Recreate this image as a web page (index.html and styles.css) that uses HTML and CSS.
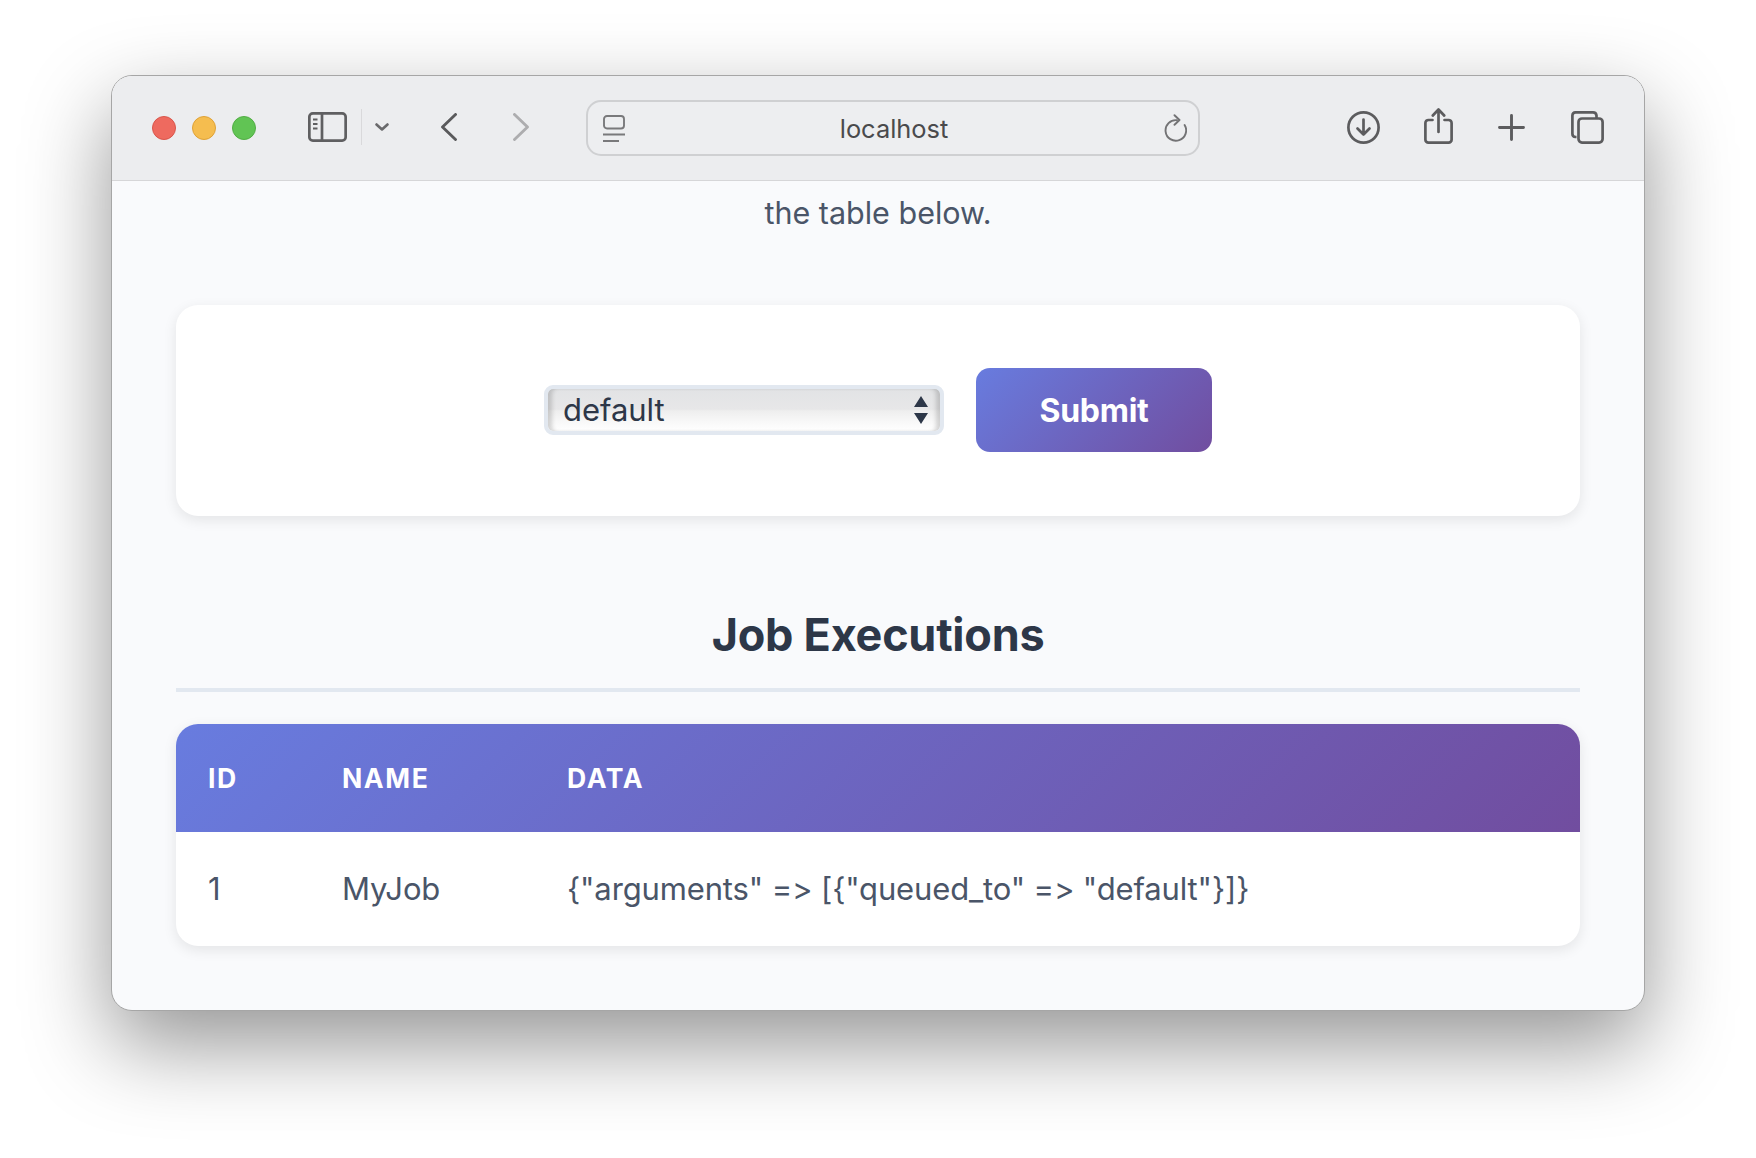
FILE: index.html
```html
<!DOCTYPE html>
<html lang="en">
<head>
<meta charset="utf-8">
<title>localhost</title>
<link rel="stylesheet" href="styles.css">
</head>
<body>
<div class="window">
  <header class="toolbar">
    <span class="light light-red"></span>
    <span class="light light-yellow"></span>
    <span class="light light-green"></span>
    <svg class="icon sidebar" width="39" height="30" viewBox="0 0 39 30" fill="none" stroke="#5f5f61" stroke-width="2.7"><rect x="1.35" y="1.35" width="36.3" height="27.3" rx="3.5"/><path d="M14 1.2V28.8"/><path d="M5 7.5H9.5M5 12H9.5M5 16.5H9.5" stroke-width="1.9"/></svg>
    <span class="toolbar-sep"></span>
    <svg class="icon chevron" width="14" height="8" viewBox="0 0 14 8" fill="none" stroke="#6a6a6c" stroke-width="2.6" stroke-linecap="round" stroke-linejoin="round"><path d="M1.5 1.5L7 6.5L12.5 1.5"/></svg>
    <svg class="icon back" width="16" height="28" viewBox="0 0 16 28" fill="none" stroke="#5a5a5c" stroke-width="2.9" stroke-linecap="round" stroke-linejoin="round"><path d="M14.5 1.5L1.5 14L14.5 26.5"/></svg>
    <svg class="icon forward" width="16" height="28" viewBox="0 0 16 28" fill="none" stroke="#adadaf" stroke-width="2.9" stroke-linecap="round" stroke-linejoin="round"><path d="M1.5 1.5L14.5 14L1.5 26.5"/></svg>
    <div class="urlbar">
      <svg class="site-icon" width="22" height="27" viewBox="0 0 22 27" fill="none" stroke="#79797b" stroke-width="1.9"><rect x="1" y="1" width="20" height="12.5" rx="3"/><path d="M0 19.5H22M0 26H16"/></svg>
      <span class="url-text">localhost</span>
      <svg class="reload" width="24" height="28" viewBox="0 0 24 28" fill="none" stroke="#737375" stroke-width="1.9" stroke-linecap="round" stroke-linejoin="round"><path d="M14 6.2A10.3 10.3 0 1 0 21.6 11"/><path d="M11.5 1.2L16.5 6L11.5 10.8"/></svg>
    </div>
    <svg class="icon download" width="33" height="33" viewBox="0 0 33 33" fill="none" stroke="#5c5c5e" stroke-width="2.7" stroke-linecap="round" stroke-linejoin="round"><circle cx="16.5" cy="16.5" r="15.1"/><path d="M16.5 8.5V23.5M10.5 17.5L16.5 23.5L22.5 17.5"/></svg>
    <svg class="icon share" width="29" height="36" viewBox="0 0 29 36" fill="none" stroke="#5c5c5e" stroke-width="2.7" stroke-linecap="round" stroke-linejoin="round"><path d="M8.5 12H4.5A3 3 0 0 0 1.4 15V31.5A3 3 0 0 0 4.5 34.6H24.5A3 3 0 0 0 27.6 31.5V15A3 3 0 0 0 24.5 12H20.5"/><path d="M14.5 24V1.8M8.8 7.5L14.5 1.5L20.2 7.5"/></svg>
    <svg class="icon plus" width="27" height="27" viewBox="0 0 27 27" fill="none" stroke="#5c5c5e" stroke-width="2.9" stroke-linecap="round"><path d="M13.5 1.5V25.5M1.5 13.5H25.5"/></svg>
    <svg class="icon tabs" width="33" height="33" viewBox="0 0 33 33" fill="none" stroke="#5c5c5e" stroke-width="2.7" stroke-linejoin="round"><path d="M5.5 26H4.5A3.3 3.3 0 0 1 1.4 22.7V4.5A3.3 3.3 0 0 1 4.5 1.4H22A3.5 3.5 0 0 1 25.5 4.5V7"/><rect x="7.5" y="7.5" width="24.1" height="24.1" rx="3.5"/></svg>
  </header>
  <main class="content">
    <p class="intro">the table below.</p>
    <section class="card">
      <form class="job-form">
        <div class="select-wrap">
          <select class="queue-select"><option>default</option></select>
          <svg class="select-arrows" width="14" height="28" viewBox="0 0 14 28"><path d="M7 0L14 11H0Z M7 28L0 17H14Z" fill="#2d3748"/></svg>
        </div>
        <button class="submit" type="button">Submit</button>
      </form>
    </section>
    <h2 class="section-title">Job Executions</h2>
    <table class="jobs">
      <thead>
        <tr><th class="col-id">ID</th><th class="col-name">NAME</th><th>DATA</th></tr>
      </thead>
      <tbody>
        <tr><td>1</td><td>MyJob</td><td>{"arguments" =&gt; [{"queued_to" =&gt; "default"}]}</td></tr>
      </tbody>
    </table>
  </main>
</div>
</body>
</html>
```
FILE: styles.css
```css
* { box-sizing: border-box; }
html, body { margin: 0; height: 100%; }
body {
  background: #fff;
  font-family: Inter, "Liberation Sans", sans-serif;
  font-variant-ligatures: none;
  font-feature-settings: "calt" 0;
  padding: 75px 111px 0;
  overflow: hidden;
}
.window {
  width: 1534px;
  height: 936px;
  background: #f9fafc;
  border: 1px solid #a6a6a6;
  border-radius: 21px;
  overflow: hidden;
  box-shadow: 0 34px 86px 0 rgba(0, 0, 0, .42);
}
.toolbar {
  height: 105px;
  background: #ecedef;
  border-bottom: 1px solid #d6d6d8;
  display: flex;
  align-items: center;
  padding: 0 0 0 40px;
}
.light {
  width: 24px;
  height: 24px;
  border-radius: 50%;
  margin-right: 16px;
  flex: none;
}
.light-red { background: #ee6a5f; border: 1px solid #d9564b; }
.light-yellow { background: #f5bd4f; border: 1px solid #dfa237; }
.light-green { background: #61c454; border: 1px solid #52ad45; margin-right: 0; }
.icon { flex: none; display: block; margin-bottom: 2px; }
.sidebar { margin-left: 52px; }
.toolbar-sep { width: 1px; height: 36px; background: #d9d9db; margin: 0 0 2px 14px; flex: none; }
.chevron { margin-left: 13px; }
.back { margin-left: 52px; }
.forward { margin-left: 56px; }
.urlbar {
  width: 614px;
  height: 56px;
  margin-left: 57px;
  flex: none;
  border: 2px solid #cfd0d2;
  border-radius: 15px;
  background: #edeef0;
  display: flex;
  align-items: center;
  justify-content: space-between;
  padding: 0 11px 0 15px;
}
.url-text { font-size: 25.4px; color: #4a4a4c; }
.site-icon { flex: none; }
.reload { flex: none; }
.download { margin-left: 147px; }
.share { margin-left: 44px; margin-bottom: 4px; }
.plus { margin-left: 45px; }
.tabs { margin-left: 46px; }
.content { padding: 0 64px; }
.intro {
  margin: 0 0 60px;
  text-align: center;
  font-size: 30.5px;
  line-height: 64px;
  color: #4a5568;
}
.card {
  background: #fff;
  border-radius: 22px;
  height: 211px;
  padding-bottom: 2px;
  box-shadow: 0 4px 14px rgba(0, 0, 0, .09);
  display: flex;
  align-items: center;
  justify-content: center;
}
.job-form { display: flex; align-items: center; gap: 32px; }
.select-wrap { position: relative; width: 400px; height: 50px; }
.queue-select {
  appearance: none;
  width: 100%;
  height: 100%;
  display: block;
  border: 4px solid #e2e8f0;
  border-radius: 9px;
  padding: 0 15px;
  font: 31px Inter, sans-serif;
  font-feature-settings: "calt" 0;
  letter-spacing: -.05px;
  color: #2d3748;
  background: linear-gradient(#e2e3e5 0%, #e7e7e8 48%, #eeeeee 52%, #f8f8f8 78%, #fff 100%);
  box-shadow: inset 6px 0 4px -2px rgba(0, 0, 0, .16), inset -6px 0 4px -2px rgba(0, 0, 0, .16);
}
.select-arrows { position: absolute; right: 16px; top: 11px; }
.submit {
  width: 236px;
  height: 84px;
  border: 0;
  border-radius: 14px;
  padding: 2px 0 0;
  background: linear-gradient(135deg, #687cdf, #714d9f);
  color: #fff;
  font: 700 32px Inter, sans-serif;
  letter-spacing: -.25px;
}
.section-title {
  margin: 0;
  padding: 88px 0 22px;
  border-bottom: 4px solid #e2e8f0;
  text-align: center;
  font-size: 45px;
  line-height: 62px;
  font-weight: 700;
  letter-spacing: -.25px;
  color: #2d3748;
}
.jobs {
  width: 100%;
  margin-top: 32px;
  border-collapse: separate;
  border-spacing: 0;
  border-radius: 22px;
  overflow: hidden;
  background: #fff;
  box-shadow: 0 4px 14px rgba(0, 0, 0, .09);
}
.jobs thead tr { background: linear-gradient(135deg, #687cdf, #714d9f); }
.jobs th {
  height: 108px;
  padding: 0 32px;
  text-align: left;
  color: #fff;
  font-size: 26.6px;
  font-weight: 700;
  letter-spacing: 1.6px;
}
.jobs td {
  height: 114px;
  padding: 0 32px 2px;
  font-size: 31px;
  letter-spacing: -.14px;
  color: #4a5568;
}
.col-id { width: 134px; }
.col-name { width: 225px; }
```
